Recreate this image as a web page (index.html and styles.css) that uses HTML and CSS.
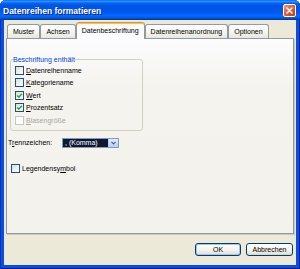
FILE: index.html
```html
<!DOCTYPE html>
<html lang="de">
<head>
<meta charset="utf-8">
<title>Datenreihen formatieren</title>
<link rel="stylesheet" href="styles.css">
</head>
<body>
<div class="window">
  <div class="titlebar">
    <span class="title">Datenreihen formatieren</span>
    <span class="close">
      <svg width="7" height="7" viewBox="0 0 7 7"><path d="M1 1 L6 6 M6 1 L1 6" stroke="#fff" stroke-width="1.5" stroke-linecap="round"/></svg>
    </span>
  </div>
  <div class="client">
    <div class="tabs">
      <div class="tab">Muster</div>
      <div class="tab">Achsen</div>
      <div class="tab active">Datenbeschriftung</div>
      <div class="tab">Datenreihenanordnung</div>
      <div class="tab">Optionen</div>
    </div>
    <div class="panel">
      <fieldset class="group">
        <legend>Beschriftung enthält</legend>
        <div class="check"><span class="box"></span><span><u>D</u>atenreihenname</span></div>
        <div class="check"><span class="box"></span><span><u>K</u>ategoriename</span></div>
        <div class="check"><span class="box"><svg width="7" height="7" viewBox="0 0 7 7"><path d="M1.2 3.4 L2.9 5.1 L5.9 1.8" fill="none" stroke="#21a121" stroke-width="1.4"/></svg></span><span><u>W</u>ert</span></div>
        <div class="check"><span class="box"><svg width="7" height="7" viewBox="0 0 7 7"><path d="M1.2 3.4 L2.9 5.1 L5.9 1.8" fill="none" stroke="#21a121" stroke-width="1.4"/></svg></span><span><u>P</u>rozentsatz</span></div>
        <div class="check disabled"><span class="box"></span><span><u>B</u>lasengröße</span></div>
      </fieldset>
      <div class="sep-row">
        <span class="sep-label">T<u>r</u>ennzeichen:</span>
        <div class="select">
          <span class="sel-text">, (Komma)</span>
          <span class="arrow"><svg width="5" height="4" viewBox="0 0 5 4"><path d="M0.5 0.8 L2.5 2.8 L4.5 0.8" fill="none" stroke="#4d6185" stroke-width="1.2"/></svg></span>
        </div>
      </div>
      <div class="check legend-check"><span class="box"></span><span>Legendensy<u>m</u>bol</span></div>
    </div>
    <div class="buttons">
      <button class="btn default">OK</button>
      <button class="btn cancel">Abbrechen</button>
    </div>
  </div>
</div>
</body>
</html>
```
FILE: styles.css
```css
* { box-sizing: border-box; }
html, body { margin: 0; padding: 0; }
body {
  width: 300px;
  height: 269px;
  overflow: hidden;
  background: #ffffff;
  font-family: "Liberation Sans", Arial, sans-serif;
  font-size: 7px;
  color: #000;
}
.window {
  height: 269px;
  display: flex;
  flex-direction: column;
  background: #0a4fdc;
  border-radius: 6px 6px 0 0;
  overflow: hidden;
  box-shadow: inset 1px 0 0 #0831b8, inset -1px 0 0 #001ea0, inset 0 -1px 0 #001890;
}
.titlebar {
  flex: none;
  height: 20px;
  display: flex;
  align-items: center;
  justify-content: space-between;
  padding: 0 4px 0 3px;
  background: linear-gradient(to bottom, #0058ee 0%, #3593ff 5%, #288eff 8%, #127dff 11%, #036ffc 14%, #0262ee 18%, #0057e5 24%, #0054e3 30%, #0055eb 56%, #005bf5 66%, #026afe 76%, #0062ef 86%, #0052d6 92%, #0040ab 96%, #003092 100%);
}
.title {
  color: #fff;
  font-weight: bold;
  font-size: 8.5px;
  text-shadow: 1px 1px 0 #0a1e8a;
  padding-top: 1px;
}
.close {
  width: 13px;
  height: 13px;
  border: 1px solid #fff;
  border-radius: 2px;
  background: linear-gradient(135deg, #f09a7c 0%, #e0603a 45%, #c93a18 100%);
  display: flex;
  align-items: center;
  justify-content: center;
}
.client {
  flex: 1;
  margin: 0 4px 4px;
  background: #ece9d8;
  padding: 2px 2px 0;
  display: flex;
  flex-direction: column;
}
.tabs {
  flex: none;
  height: 16px;
  display: flex;
  align-items: flex-end;
  padding-left: 1px;
  position: relative;
  z-index: 1;
}
.tab {
  height: 14px;
  line-height: 13px;
  padding: 0 5px;
  border: 1px solid #919b9c;
  border-bottom: none;
  border-radius: 3px 3px 0 0;
  background: linear-gradient(to bottom, #ffffff, #f3f3ef 60%, #e7e6df);
  white-space: nowrap;
}
.tab.active {
  height: 17px;
  line-height: 15px;
  margin-bottom: -1px;
  background: #fcfcfe;
  border-top-color: #e68b2c;
  box-shadow: inset 0 1px 0 #ffc73c;
}
.panel {
  flex: none;
  height: 196px;
  border: 1px solid #919b9c;
  background: linear-gradient(to bottom, #fcfcfe, #f4f3ee 25%, #f3f2ed);
  box-shadow: 1px 1px 0 #c9c7ba;
}
.group {
  margin: 16px 0 0 3px;
  width: 133px;
  padding: 0 2px 3px;
  border: 1px solid #d0d0bf;
  border-radius: 3px;
  min-inline-size: 0;
}
.group legend {
  padding: 0;
  color: #0046d5;
  line-height: 9px;
}
.check {
  display: flex;
  align-items: center;
  gap: 2px;
  height: 12.5px;
  margin-left: 2px;
  white-space: nowrap;
}
.box {
  width: 9px;
  height: 9px;
  flex: none;
  border: 1px solid #1c5180;
  background: linear-gradient(135deg, #dcdcd7, #ffffff);
  display: flex;
  align-items: center;
  justify-content: center;
}
.check.disabled { color: #aca899; }
.check.disabled .box {
  border-color: #cac8bb;
  background: #fff;
}
.sep-row {
  display: flex;
  align-items: center;
  height: 10px;
  margin: 7px 0 0 1px;
}
.sep-label {
  width: 54px;
  flex: none;
}
.select {
  width: 57px;
  height: 10px;
  border: 1px solid #7f9db9;
  background: #fff;
  display: flex;
}
.sel-text {
  flex: 1;
  background: #0f1833;
  color: #fff;
  line-height: 8px;
  padding-left: 2px;
  white-space: nowrap;
}
.arrow {
  width: 10px;
  flex: none;
  background: linear-gradient(to bottom, #e3ebfd, #b9cdf6);
  border-left: 1px solid #bcd0f7;
  display: flex;
  align-items: center;
  justify-content: center;
}
.legend-check {
  margin: 16px 0 0 4px;
  height: 9px;
}
.buttons {
  display: flex;
  justify-content: flex-end;
  gap: 5px;
  margin-top: 9px;
  padding-right: 1px;
}
.btn {
  height: 13px;
  padding: 0;
  font-family: inherit;
  font-size: 7px;
  line-height: 11px;
  color: #000;
  border: 1px solid #003c74;
  border-radius: 3px;
  background: linear-gradient(to bottom, #ffffff, #f5f4ef 50%, #e8e5da 85%, #d6d0c5);
}
.btn.default {
  width: 46px;
  box-shadow: inset 0 0 0 1px #a9c3ef;
}
.btn.cancel { width: 47px; }
```
